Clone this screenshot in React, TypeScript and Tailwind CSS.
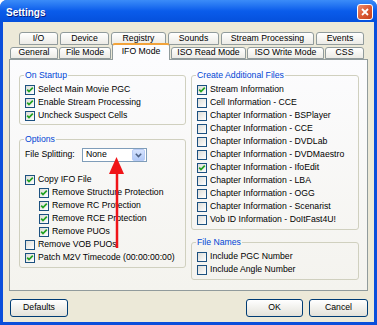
import React from "react";

const Check = ({ label, checked, indent }: { label: string; checked?: boolean; indent?: boolean }) => (
  <div className={`flex items-center h-[13px] gap-[3px] ${indent ? "ml-[14px]" : ""}`}>
    <div className="w-[10px] h-[10px] border border-[#1C5180] bg-linear-to-br from-[#DCDCD7] to-white flex items-center justify-center shrink-0">
      {checked && (
        <svg width="8" height="8" viewBox="0 0 8 8">
          <path d="M1.2 3.6 L3 5.6 L6.8 1.6" stroke="#21A121" strokeWidth="1.7" fill="none" />
        </svg>
      )}
    </div>
    <span className="whitespace-nowrap leading-[13px]">{label}</span>
  </div>
);

const Group = ({ title, className, children }: { title: string; className?: string; children: React.ReactNode }) => (
  <fieldset className={`border border-[#D0D0BF] rounded-[3px] px-[5px] ${className ?? ""}`}>
    <legend className="text-[#0046D5] px-[1px] -ml-[1px] leading-[11px]">{title}</legend>
    {children}
  </fieldset>
);

const Tab = ({ label, w }: { label: string; w: string }) => (
  <div className={`${w} h-full border border-[#919B9C] rounded-t-[3px] bg-linear-to-b from-white to-[#ECEBE6] flex items-center justify-center whitespace-nowrap`}>
    {label}
  </div>
);

const Btn = ({ label, w }: { label: string; w: string }) => (
  <div className={`${w} h-[18px] border border-[#003C74] rounded-[3px] bg-linear-to-b from-white to-[#E3E2DA] flex items-center justify-center`}>
    {label}
  </div>
);

export default function App() {
  return (
    <div className="w-[377px] h-[325px] bg-white relative font-['Liberation_Sans',Arial,sans-serif] text-[8.7px] text-black">
      <div className="w-full h-full rounded-t-[7px] bg-[#0A4EDB] flex flex-col px-[3px] pb-[3px]">
        {/* title bar */}
        <div className="h-[22px] -mx-[3px] rounded-t-[7px] bg-linear-to-b from-[#3B8CF8] via-[#0A5CEB] to-[#0550DC] flex items-center justify-between pl-[6px] pr-[4px]">
          <span className="text-white font-bold text-[10px] [text-shadow:1px_1px_0_#0A1E80] mt-[2px]">Settings</span>
          <div className="w-[16px] h-[16px] mt-[2px] rounded-[3px] border border-white bg-linear-to-br from-[#EE8C6E] via-[#DC5B35] to-[#C4401C] flex items-center justify-center">
            <svg width="10" height="10" viewBox="0 0 10 10">
              <path d="M2 2 L8 8 M8 2 L2 8" stroke="white" strokeWidth="1.8" />
            </svg>
          </div>
        </div>

        {/* body */}
        <div className="flex-1 bg-[#ECE9D8] flex flex-col">
          <div className="mt-[10px] pl-[16px] flex gap-[2px] h-[13px]">
            <Tab label="I/O" w="w-[39px]" />
            <Tab label="Device" w="w-[49px]" />
            <Tab label="Registry" w="w-[55px]" />
            <Tab label="Sounds" w="w-[51px]" />
            <Tab label="Stream Processing" w="w-[93px]" />
            <Tab label="Events" w="w-[48px]" />
          </div>
          <div className="mt-[2px] pl-[7px] flex items-end gap-[1px] h-[12px] relative z-10">
            <Tab label="General" w="w-[48px]" />
            <Tab label="File Mode" w="w-[52px]" />
            <div className="w-[58px] h-[17px] relative top-[1px] border-x border-[#919B9C] border-t-[2px] border-t-[#F2A33A] rounded-t-[3px] bg-[#FCFCFE] flex items-center justify-center pb-[2px]">
              IFO Mode
            </div>
            <Tab label="ISO Read Mode" w="w-[75px]" />
            <Tab label="ISO Write Mode" w="w-[77px]" />
            <Tab label="CSS" w="w-[39px]" />
          </div>

          {/* panel */}
          <div className="ml-[6px] w-[359px] h-[232px] border border-[#919B9C] bg-linear-to-b from-[#FCFCFE] to-[#F4F3EE] flex gap-[5px] pl-[9px] pt-[10px]">
            <div className="w-[167px] flex flex-col">
              <Group title="On Startup" className="pb-[2px]">
                <div className="mt-[2px]">
                  <Check checked label="Select Main Movie PGC" />
                  <Check checked label="Enable Stream Processing" />
                  <Check checked label="Uncheck Suspect Cells" />
                </div>
              </Group>
              <Group title="Options" className="mt-[9px] pb-[3px]">
                <div className="mt-[3px] flex items-center h-[14px]">
                  <span className="w-[57px]">File Splitting:</span>
                  <div className="w-[65px] h-[14px] border border-[#7F9DB9] bg-white flex items-center">
                    <span className="flex-1 pl-[3px]">None</span>
                    <div className="w-[13px] h-[12px] mr-[1px] rounded-[2px] bg-linear-to-b from-[#D6E3FE] to-[#B1C9F7] border border-[#B9CCF5] flex items-center justify-center">
                      <svg width="7" height="5" viewBox="0 0 7 5">
                        <path d="M0.8 0.8 L3.5 3.6 L6.2 0.8" stroke="#4D6185" strokeWidth="1.5" fill="none" />
                      </svg>
                    </div>
                  </div>
                </div>
                <div className="mt-[11px]">
                  <Check checked label="Copy IFO File" />
                  <Check checked indent label="Remove Structure Protection" />
                  <Check checked indent label="Remove RC Protection" />
                  <Check checked indent label="Remove RCE Protection" />
                  <Check checked indent label="Remove PUOs" />
                  <Check label="Remove VOB PUOs" />
                  <Check checked label="Patch M2V Timecode (00:00:00:00)" />
                </div>
              </Group>
            </div>
            <div className="w-[168px] flex flex-col">
              <Group title="Create Additional Files" className="pb-[3px]">
                <div className="mt-[2px]">
                  <Check checked label="Stream Information" />
                  <Check label="Cell Information - CCE" />
                  <Check label="Chapter Information - BSPlayer" />
                  <Check label="Chapter Information - CCE" />
                  <Check label="Chapter Information - DVDLab" />
                  <Check label="Chapter Information - DVDMaestro" />
                  <Check checked label="Chapter Information - IfoEdit" />
                  <Check label="Chapter Information - LBA" />
                  <Check label="Chapter Information - OGG" />
                  <Check label="Chapter Information - Scenarist" />
                  <Check label="Vob ID Information - DoItFast4U!" />
                </div>
              </Group>
              <Group title="File Names" className="mt-[7px] pb-[3px]">
                <div className="mt-[2px]">
                  <Check label="Include PGC Number" />
                  <Check label="Include Angle Number" />
                </div>
              </Group>
            </div>
          </div>

          {/* buttons */}
          <div className="mt-[8px] flex pl-[7px] pr-[6px] gap-[6px]">
            <Btn label="Defaults" w="w-[58px]" />
            <div className="ml-auto" />
            <Btn label="OK" w="w-[57px]" />
            <Btn label="Cancel" w="w-[59px]" />
          </div>
        </div>
      </div>

      {/* red arrow annotation */}
      <svg className="absolute left-0 top-0 pointer-events-none" width="377" height="325" viewBox="0 0 377 325">
        <path d="M117 171 L117 248" stroke="#F01418" strokeWidth="2.5" />
        <path d="M116.5 157 L109 174 L124 174 Z" fill="#F01418" />
      </svg>
    </div>
  );
}
